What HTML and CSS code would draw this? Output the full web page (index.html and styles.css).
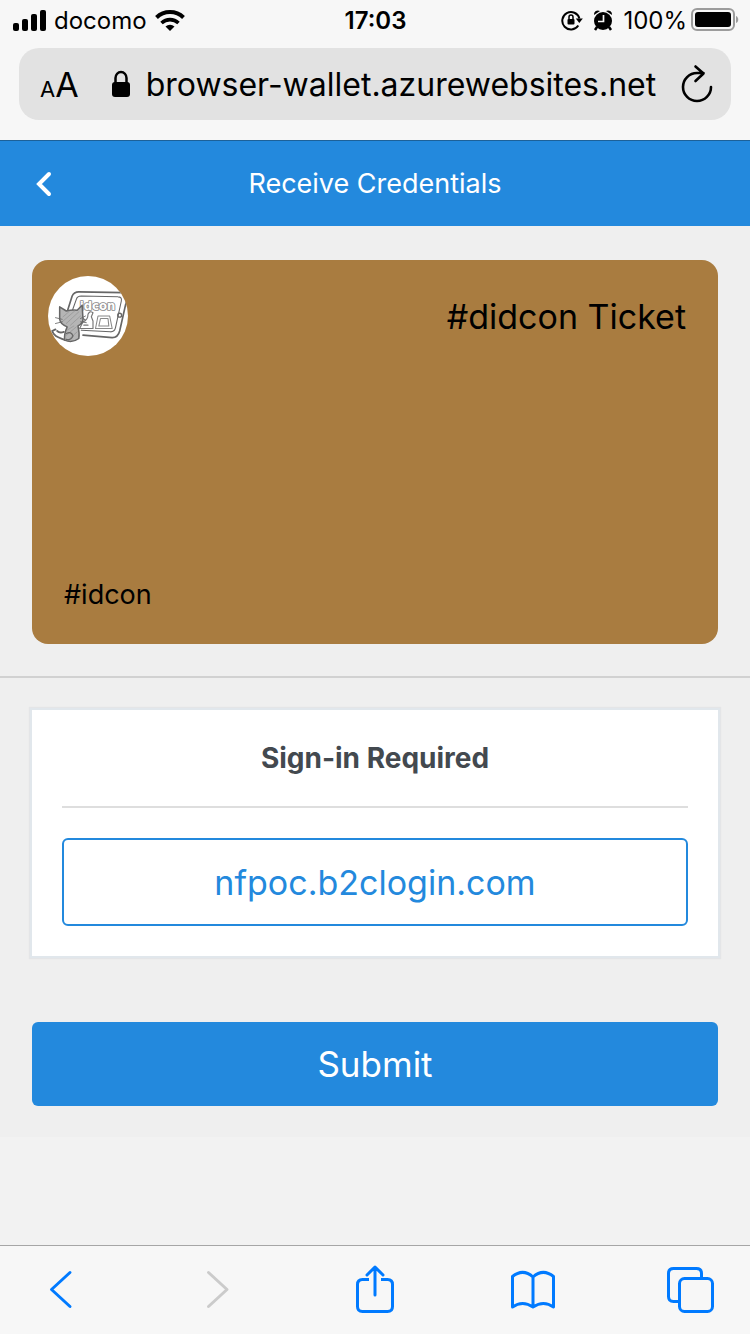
FILE: index.html
```html
<!DOCTYPE html>
<html lang="en">
<head>
<meta charset="utf-8">
<meta name="viewport" content="width=device-width, initial-scale=1">
<title>Receive Credentials</title>
<link rel="stylesheet" href="styles.css">
</head>
<body>
<div class="browser-top">
  <div class="status">
    <div class="status-left">
      <svg width="34" height="22" viewBox="0 0 34 22" aria-hidden="true"><rect x="1" y="14" width="6" height="8" rx="2"/><rect x="10" y="10" width="6" height="12" rx="2"/><rect x="19" y="5" width="6" height="17" rx="2"/><rect x="28" y="1" width="6" height="21" rx="2"/></svg>
      <span>docomo</span>
      <svg width="30" height="22" viewBox="0 0 30 22" aria-hidden="true"><g fill="none" stroke="#000" stroke-width="4"><path d="M1.500 8.500a19.500 19.500 0 0 1 27 0"/><path d="M6.500 14a12.500 12.500 0 0 1 17 0" stroke-width="3.600"/></g><path d="M10.500 17.500a7 7 0 0 1 9 0L15 22z"/></svg>
    </div>
    <span class="clock">17:03</span>
    <div class="status-right">
      <svg width="22" height="22" viewBox="0 0 22 22" aria-hidden="true"><path d="M17.300 16.500A8.700 8.700 0 1 1 18.400 9.500" fill="none" stroke="#000" stroke-width="2"/><path d="M14.800 9.500h7l-3.500 4.500z"/><rect x="6.500" y="10" width="7" height="5.500" rx="1"/><path d="M8 10V8a2 2 0 0 1 4 0v2" fill="none" stroke="#000" stroke-width="1.500"/></svg>
      <svg width="20" height="22" viewBox="0 0 20 22" aria-hidden="true"><circle cx="10" cy="12" r="9"/><path d="M1 6a4 4 0 0 1 6-4zM19 6a4 4 0 0 0-6-4z"/><path d="M4 18l-2 3M16 18l2 3" stroke="#000" stroke-width="2.500"/><path d="M10.500 6v6.500H5" fill="none" stroke="#f7f7f7" stroke-width="1.700"/></svg>
      <span>100%</span>
      <svg class="battery" width="48" height="24" viewBox="0 0 48 24" aria-hidden="true"><rect x="1" y="1" width="42" height="21" rx="5" fill="none" stroke="#9c9c9c" stroke-width="2"/><rect x="4" y="4" width="36" height="15" rx="3"/><path d="M45 8c3 1 3 6 0 7z" fill="#9c9c9c"/></svg>
    </div>
  </div>
  <div class="address">
    <button class="text-size" aria-label="Text size"><span class="small-a">A</span><span class="big-a">A</span></button>
    <svg class="lock" width="20" height="28" viewBox="0 0 20 28" aria-hidden="true"><rect x="1" y="12" width="18" height="15" rx="3"/><path d="M4.500 13V8a5.500 6 0 0 1 11 0v5" fill="none" stroke="#000" stroke-width="2.500"/></svg>
    <span class="url">browser-wallet.azurewebsites.net</span>
    <button class="reload" aria-label="Reload"><svg width="34" height="40" viewBox="0 0 34 40" fill="none" stroke="#000" stroke-width="2.600" stroke-linecap="round" stroke-linejoin="round"><path d="M31 23A14 14 0 1 1 17 9h6.500M15.500 2.500l8 7-8 7.500"/></svg></button>
  </div>
</div>

<header class="app-bar">
  <button class="back" aria-label="Back"><svg width="24" height="28" viewBox="0 0 24 28" fill="none" stroke="#fff" stroke-width="4" stroke-linecap="round"><path d="M17 4L7 14l10 10"/></svg></button>
  <h1>Receive Credentials</h1>
</header>

<main>
  <section class="card-area">
    <article class="card">
      <div class="card-head">
        <svg class="logo" viewBox="0 0 96 96" role="img" aria-label="idcon">
          <defs><clipPath id="disc"><circle cx="48" cy="48" r="48"/></clipPath></defs>
          <g clip-path="url(#disc)" fill="none" stroke="#666" stroke-width="1.600" stroke-linejoin="round" stroke-linecap="round">
            <rect width="96" height="96" fill="#fff" stroke="none"/>
            <path d="M23 43L29 24q2-5 8-5l53 1q6 0 5 6l-9 40q-2 8-9 8L42 71" stroke-width="2"/>
            <path d="M29 42L34 28q1-4 6-4l44 1q5 0 4 5l-7 32q-1 5-6 5l-35-2" stroke-width="1.300"/>
            <text class="logo-text" x="38" y="41">idcon</text>
            <path d="M60 48l-3 15h20l-3-15zM63 51l-2 9h12l-1-9z" stroke="#888" stroke-width="1.300"/>
            <path d="M48 46q2-5 6-2l-2 5 2 5v9H38l4-8q6-2 6-9zM41 50l4 3M43 59h5" stroke="#777" stroke-width="1.400"/>
            <circle cx="86" cy="47" r="2.300"/>
            <path d="M21 77C14 74 7 73 5 66M5 66l4-2M19 67q-5 2-8-1" stroke-width="2.200"/>
            <path d="M14 37l8 5q7-2 13-1l6-6 1 17q0 5-6 8 2 9 1 15-8 6-17 2-1-7 3-16-8-3-9-9z" fill="#b5b5b5" stroke-width="1.800"/>
            <path d="M18 49l7-6M17 55l15-13M22 57l15-14M27 59l12-11M23 65l8-5M21 72l13-11M24 77l11-10" stroke="#999" stroke-width="1"/>
            <path d="M9 50l8 2M9 57l8-2M39 51l6-3M39 55l7 1" stroke-width="1"/>
            <path d="M22 69q6-3 8 3-3 6-8 4" stroke-width="1.500"/>
          </g>
        </svg>
        <h2>#didcon Ticket</h2>
      </div>
      <p>#idcon</p>
    </article>
  </section>
  <section class="actions">
    <div class="panel">
      <h3>Sign-in Required</h3>
      <a class="provider" href="#">nfpoc.b2clogin.com</a>
    </div>
    <button class="submit">Submit</button>
  </section>
</main>

<nav class="toolbar" aria-label="Browser">
  <button aria-label="Back"><svg viewBox="0 0 64 88"><path d="M42 26.500L23.500 43.500l18.500 17"/></svg></button>
  <button class="off" aria-label="Forward" disabled><svg viewBox="0 0 64 88"><path d="M22.500 26.500l18.500 17-18.500 17"/></svg></button>
  <button aria-label="Share"><svg viewBox="0 0 64 88"><path d="M26 33.500h-6.500q-5 0-5 5v22q0 5 5 5h25q5 0 5-5v-22q0-5-5-5H38" stroke-linecap="butt"/><path d="M32 49V21M24 29l8-8 8 8"/></svg></button>
  <button aria-label="Bookmarks"><svg viewBox="0 0 64 88"><path d="M32 61V31Q22 22 11.500 30.500V61q10-7 20.500 0 10.500-7 20.500 0V30.500Q42 22 32 31"/></svg></button>
  <button aria-label="Tabs"><svg viewBox="0 0 64 88"><rect x="21.500" y="32.500" width="33" height="33" rx="5"/><path d="M21.500 55.500h-6q-5 0-5-5v-23q0-5 5-5h23q5 0 5 5v5" stroke-linecap="butt"/></svg></button>
</nav>
</body>
</html>
```
FILE: styles.css
```css
* { box-sizing: border-box; }
body {
  margin: 0;
  min-height: 100vh;
  display: flex;
  flex-direction: column;
  background: #f2f2f2;
  color: #000;
  font-family: Inter, "Liberation Sans", sans-serif;
}
h1, h2, h3, p { margin: 0; font-weight: 400; }
button { border: 0; padding: 0; background: none; color: inherit; font: inherit; }
svg { display: block; flex: none; }

.browser-top { background: #f7f7f7; padding-bottom: 20px; }
.status {
  display: grid;
  grid-template-columns: 1fr auto 1fr;
  align-items: center;
  height: 40px;
  padding: 0 11px 0 12px;
  font-size: 24px;
}
.status-left { display: flex; align-items: center; gap: 8px; }
.status-right { display: flex; align-items: center; justify-content: flex-end; gap: 10px; }
.battery { margin-left: -6px; }
.clock { font-weight: 600; }

.address {
  display: flex;
  align-items: center;
  height: 72px;
  margin: 8px 19px 0;
  padding: 0 17px 0 21px;
  border-radius: 20px;
  background: #e2e2e2;
}
.text-size { display: flex; align-items: baseline; padding-top: 6px; line-height: 40px; }
.small-a { font-size: 22px; }
.big-a { font-size: 34px; }
.lock { margin-left: 32px; }
.url { margin-left: 15px; font-size: 32px; white-space: nowrap; }
.reload { margin-left: auto; }

.app-bar {
  display: grid;
  grid-template-columns: 56px 1fr 56px;
  align-items: center;
  height: 86px;
  padding: 0 32px;
  border-top: 1px solid #1c6199;
  background: #2389dd;
  color: #fff;
}
.app-bar h1 { font-size: 27px; text-align: center; }

main { background: #efefef; }
.card-area { padding: 34px 32px 32px; border-bottom: 2px solid #d1d1d1; }
.card {
  display: flex;
  flex-direction: column;
  justify-content: space-between;
  min-height: 384px;
  padding: 16px 32px 32px;
  border-radius: 16px;
  background: #a97c40;
}
.card-head { display: flex; justify-content: space-between; align-items: center; margin-left: -16px; }
.logo { width: 80px; height: 80px; }
.logo-text {
  font: 700 14px "DejaVu Sans", sans-serif;
  fill: #fff;
  stroke: #888;
  stroke-width: 2px;
  paint-order: stroke;
}
.card h2 { font-size: 34px; }
.card p { font-size: 27px; line-height: 34px; }

.actions { padding: 32px 32px 31px; }
.panel {
  padding: 30px;
  background: #fff;
  box-shadow: 0 0 0 2px #e1e7ec, 0 0 1px 3px #e4e5e7;
}
.panel h3 {
  padding-bottom: 30px;
  border-bottom: 2px solid #dedede;
  color: #43494f;
  font-size: 28px;
  font-weight: 700;
  line-height: 36px;
  text-align: center;
}
.provider {
  display: flex;
  align-items: center;
  justify-content: center;
  height: 88px;
  margin-top: 30px;
  border: 2px solid #2389dd;
  border-radius: 6px;
  color: #2389dd;
  font-size: 34px;
  text-decoration: none;
}
.submit {
  display: block;
  width: 100%;
  height: 84px;
  margin-top: 66px;
  border-radius: 6px;
  background: #2389dd;
  color: #fff;
  font-size: 35px;
}

.toolbar {
  display: flex;
  justify-content: space-between;
  margin-top: auto;
  padding: 0 28px;
  border-top: 1px solid #a6a6a6;
  background: #f7f7f7;
}
.toolbar svg {
  width: 64px;
  height: 88px;
  fill: none;
  stroke: #007aff;
  stroke-width: 3px;
  stroke-linecap: round;
  stroke-linejoin: round;
}
.toolbar .off svg { stroke: #cbcbcb; }
```
